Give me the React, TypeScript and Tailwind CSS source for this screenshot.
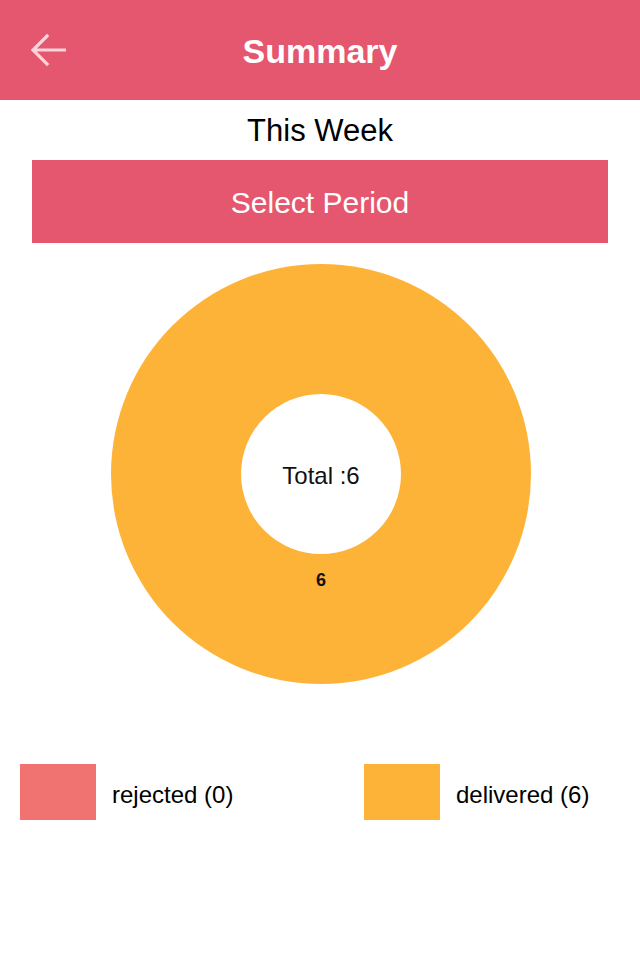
import React from 'react';

const font = { fontFamily: '"Liberation Sans", Arial, sans-serif' };

// Summary data for the donut
const slices = [
  { label: 'rejected', value: 0, color: '#f07271' },
  { label: 'delivered', value: 6, color: '#fdb338' },
];

const Donut: React.FC = () => {
  const total = slices.reduce((s, x) => s + x.value, 0);
  return (
    <svg width="420" height="420" viewBox="0 0 420 420">
      {slices
        .filter((s) => s.value > 0)
        .map((s) =>
          s.value === total ? (
            <circle key={s.label} cx="210" cy="210" r="210" fill={s.color} />
          ) : null,
        )}
      <circle cx="210" cy="210" r="80" fill="#ffffff" />
      <text
        x="210"
        y="211"
        textAnchor="middle"
        dominantBaseline="central"
        fontSize="24"
        fill="#111"
        style={font}
      >
        Total :{total}
      </text>
      <text
        x="210"
        y="316"
        textAnchor="middle"
        dominantBaseline="central"
        fontSize="18"
        fontWeight="bold"
        fill="#111"
        style={font}
      >
        6
      </text>
    </svg>
  );
};

const App: React.FC = () => {
  return (
    <div className="w-[640px] h-[960px] bg-white overflow-hidden" style={font}>
      {/* Header */}
      <div className="relative h-[100px] bg-[#e5576f] flex items-center justify-center">
        <button className="absolute left-[29px] top-[33px] w-[38px] h-[34px] flex items-center justify-center">
          <svg width="36" height="34" viewBox="0 0 36 34" fill="none">
            <path
              d="M35 17H4M17 3L3 17l14 14"
              stroke="#fbd3da"
              strokeWidth="3.2"
              strokeLinecap="square"
            />
          </svg>
        </button>
        <h1 className="text-[34px] font-bold text-white leading-none mt-[2px]">Summary</h1>
      </div>

      <div className="h-[60px] flex items-center justify-center">
        <span className="text-[31px] text-black leading-none">This Week</span>
      </div>

      <button className="mx-[32px] w-[576px] h-[83px] bg-[#e5576f] text-white text-[30px] flex items-center justify-center pt-[2px]">
        Select Period
      </button>

      <div className="mt-[21px] flex justify-center pl-[1px]">
        <Donut />
      </div>

      {/* Legend */}
      <div className="mt-[80px] grid grid-cols-[344px_1fr] pl-[20px]">
        {slices.map((s) => (
          <div key={s.label} className="flex items-center">
            <div className="w-[76px] h-[56px] shrink-0" style={{ backgroundColor: s.color }} />
            <span className="ml-[16px] mt-[5px] text-[24px] text-black">
              {s.label} ({s.value})
            </span>
          </div>
        ))}
      </div>
    </div>
  );
};

export default App;
